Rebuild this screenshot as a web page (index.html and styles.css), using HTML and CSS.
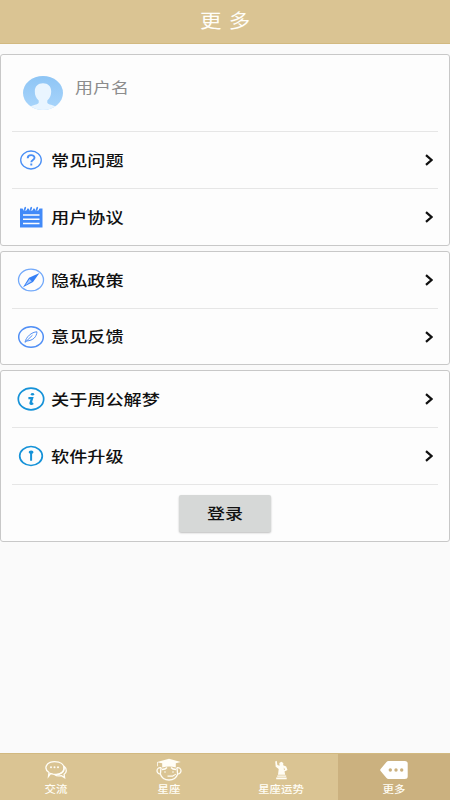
FILE: index.html
```html
<!DOCTYPE html>
<html lang="zh-CN">
<head>
<meta charset="utf-8">
<title>更多</title>
<link rel="stylesheet" href="styles.css">
</head>
<body>
<div class="app">
  <header class="header"><h1>更 多</h1></header>
  <main class="main">
    <section class="card">
      <div class="profile">
        <svg class="avatar" viewBox="0 0 40 34">
          <defs>
            <linearGradient id="sky" x1="0" y1="0" x2="0" y2="1"><stop offset="0" stop-color="#8ec5f5"/><stop offset="1" stop-color="#a9d5fb"/></linearGradient>
            <clipPath id="oval"><ellipse cx="20" cy="17" rx="20" ry="17"/></clipPath>
          </defs>
          <g clip-path="url(#oval)">
            <rect width="40" height="34" fill="url(#sky)"/>
            <path fill="#e9f5ff" d="M20 7.3c-5 0-8.2 3.200-8.200 8 0 4 1 6.500 3.900 9.200v2.300c-1 2-5.700 2.200-9.700 4.200v4h28v-4c-4-2-8.700-2.200-9.700-4.200v-2.300c2.900-2.700 3.900-5.200 3.900-9.200 0-4.800-3.200-8-8.200-8z"/>
          </g>
        </svg>
        <span class="username">用户名</span>
      </div>
      <div class="row">
        <svg class="icon" viewBox="0 0 28 24"><g fill="none" stroke="#4a8ff5"><ellipse cx="14" cy="12" rx="10.300" ry="9" stroke-width="1.300"/><path stroke-width="1.900" d="M10.700 10.200c0-4 6.800-4 6.800-.4 0 2.300-3.200 2.200-3.200 4.500M14.300 15.400v2"/></g></svg>
        <span class="label">常见问题</span>
        <svg class="arrow" viewBox="0 0 8 12"><path d="M1 1.200L6.500 6 1 10.800"/></svg>
      </div>
      <div class="row">
        <svg class="icon" viewBox="0 0 28 24"><path fill="#428af8" d="M3 3.500h22.500V22.500H3z"/><g fill="#fdfdfd"><circle cx="8" cy="3.500" r="2.300"/><circle cx="14" cy="3.500" r="2.300"/><circle cx="20" cy="3.500" r="2.300"/></g><path stroke="#428af8" stroke-width="1.700" stroke-linecap="round" d="M8.300 2.700L7.500 5M14.300 2.700L13.500 5M20.300 2.700L19.500 5"/><path stroke="#fdfdfd" stroke-width="1.500" d="M6 10h16.500M6 14.200h16.500M6 18.400h16.500"/></svg>
        <span class="label">用户协议</span>
        <svg class="arrow" viewBox="0 0 8 12"><path d="M1 1.200L6.500 6 1 10.800"/></svg>
      </div>
    </section>
    <section class="card">
      <div class="row">
        <svg class="icon" viewBox="0 0 28 24"><ellipse cx="14" cy="12" rx="12.500" ry="10.800" fill="none" stroke="#72a9fa" stroke-width="1.300"/><path fill="#347ff6" d="M22.500 5L12 9.800 6 19.200l10-5.200z"/><path fill="#a9cbff" d="M12.500 11L8.300 17.200l6.500-4z"/></svg>
        <span class="label">隐私政策</span>
        <svg class="arrow" viewBox="0 0 8 12"><path d="M1 1.200L6.500 6 1 10.800"/></svg>
      </div>
      <div class="row">
        <svg class="icon" viewBox="0 0 28 24"><g fill="none" stroke="#508ff5"><ellipse cx="14" cy="12" rx="12.300" ry="10.300" stroke-width="1.500"/><path stroke-width="1" d="M8 17.300c1-5.300 6.500-10.300 12-10.500-.5 5-3.500 8.700-10.500 9.200L15.500 10.200M8 17.300l2-1.800"/></g></svg>
        <span class="label">意见反馈</span>
        <svg class="arrow" viewBox="0 0 8 12"><path d="M1 1.200L6.500 6 1 10.800"/></svg>
      </div>
    </section>
    <section class="card">
      <div class="row">
        <svg class="icon" viewBox="0 0 28 24"><ellipse cx="14" cy="12" rx="12.700" ry="10.800" fill="none" stroke="#1592d8" stroke-width="1.700"/><ellipse cx="15.500" cy="7.300" rx="1.700" ry="1.300" fill="#1592d8"/><path fill="none" stroke="#1592d8" stroke-width="2.300" d="M11.400 11.200h3.700l-1.500 4.600c-.5 1.500 1.300 1.300 2.500.4"/></svg>
        <span class="label">关于周公解梦</span>
        <svg class="arrow" viewBox="0 0 8 12"><path d="M1 1.200L6.500 6 1 10.800"/></svg>
      </div>
      <div class="row">
        <svg class="icon" viewBox="0 0 28 24"><ellipse cx="14" cy="12" rx="11.300" ry="9.500" fill="none" stroke="#1592d8" stroke-width="1.700"/><path fill="#1592d8" d="M14.100 6.500c-1.600 0-2.400.9-2.400 2.100l1.400 1.500v6.600h2v-6.600l1.400-1.500c0-1.200-.8-2.100-2.400-2.100z"/></svg>
        <span class="label">软件升级</span>
        <svg class="arrow" viewBox="0 0 8 12"><path d="M1 1.200L6.500 6 1 10.800"/></svg>
      </div>
      <div class="login-row"><button class="login"><span>登录</span></button></div>
    </section>
  </main>
  <nav class="tabs">
    <a class="tab">
      <svg viewBox="0 0 28 24"><g fill="none" stroke="#fffdf5" stroke-width="1.300"><path d="M8.600 15.500L6.500 18.300l.5-3.800C1 10.500 4.500 3.700 12.500 3.700c6 0 9.600 2.800 9.600 6.700 0 4.300-5 7-11 5.800z"/><path d="M22.300 8.500c3.200 2.500 2.200 6.500-.2 7.800l.5 3.300-3.200-2c-3 .7-5.200.3-6.500-.8 5.300-.2 9.300-3 9.400-8.300z"/></g><g fill="#fffdf5"><circle cx="9" cy="9.300" r="1"/><circle cx="12.500" cy="9.300" r="1"/><circle cx="16" cy="9.300" r="1"/></g></svg>
      <span>交流</span>
    </a>
    <a class="tab">
      <svg viewBox="0 0 28 24"><path fill="#fffdf5" d="M14 .8L25.800 4l-5 1.300v4.200q-6.500-2-13.600 0V5.300L3 4.500v3.700h-.8V4z"/><g fill="none" stroke="#fffdf5" stroke-width="1.300"><path d="M6 9.700c-5.200-.7-5.200 6.200-.7 6.300 2.700 8 14.700 8 17.400 0 4.500-.1 4.500-7-.7-6.300M6.300 9.500c-.8 2.500-.8 4.500-.8 6M21.700 9.500c.8 2.500.8 4.500.8 6M7 11.500q3.500 0 5-2M21 11.500q-3.500 0-5-2"/></g><path fill="#fffdf5" d="M12.500 17.400h5l3.200-1.700.4.800-3.300 2.300h-5.300z"/><circle cx="10" cy="14" r=".8" fill="#fffdf5"/><circle cx="18" cy="14" r=".8" fill="#fffdf5"/></svg>
      <span>星座</span>
    </a>
    <a class="tab">
      <svg viewBox="0 0 28 24"><path fill="#fffdf5" d="M8.200 3.500l1.500-.8.700 4.300 2.200.7-.3-2.700 2-1.300 2 1.300-.1 2.200 3 1.200 1.300 3.700-3 1.400.7 3.200H11l.7-5.800-3-2.200z"/><path fill="#fffdf5" d="M10.200 17.400h9v1.300h-9zM9.200 19.400h10.500v1.800H9.200z"/><path d="M16.800 9.400l1.200 2-1.100.9z" fill="#dac493"/></svg>
      <span>星座运势</span>
    </a>
    <a class="tab active">
      <svg viewBox="0 0 28 24"><path fill="#fff" d="M8.500 3h16.200q3 0 3 2.500v13q0 2.500-3 2.500H8.500q-1.200 0-2-1L.6 13q-.8-1 0-2l5.900-7q.8-1 2-1z"/><g fill="#cbb17f"><circle cx="10.300" cy="12" r="1.700"/><circle cx="16" cy="12" r="1.700"/><circle cx="21.700" cy="12" r="1.700"/></g></svg>
      <span>更多</span>
    </a>
  </nav>
</div>
</body>
</html>
```
FILE: styles.css
```css
* { box-sizing: border-box; }
body {
  margin: 0;
  background: #fafafa;
  font-family: "Noto Sans CJK SC", sans-serif;
}
.app { display: flex; flex-direction: column; height: 800px; overflow: hidden; }
.header {
  flex: none;
  height: 44px;
  background: #dac493;
  border-bottom: 1px solid #d2b980;
  display: flex;
  align-items: center;
  justify-content: center;
}
.header h1 {
  margin: 0 0 3px;
  color: #fffefa;
  font-size: 19px;
  font-weight: 400;
  line-height: 28px;
  word-spacing: 2px;
  transform: scaleX(1.13);
}
.main {
  flex: 1;
  display: flex;
  flex-direction: column;
  gap: 5px;
  padding-top: 10px;
}
.card {
  background: #fdfdfd;
  border: 1px solid #c8c8c8;
  border-radius: 3px;
  padding: 0 11px;
}
.profile {
  display: flex;
  height: 77px;
  padding: 21px 0 0 11px;
  border-bottom: 1px solid #e6e6e6;
}
.avatar { width: 40px; height: 34px; }
.username {
  margin: -1px 0 0 12px;
  height: 24px;
  line-height: 24px;
  font-size: 15px;
  color: #8c8c8c;
  transform: scaleX(1.2);
  transform-origin: left;
}
.row {
  display: flex;
  align-items: center;
  height: 57px;
  padding: 0 5px;
  border-bottom: 1px solid #e6e6e6;
}
.card .row:last-child { border-bottom: 0; height: 56px; }
.card:nth-child(2) .row:last-child { height: 55px; }
.icon { width: 28px; height: 24px; }
.label {
  margin: -1px 0 0 6px;
  font-size: 15px;
  font-weight: 500;
  line-height: 24px;
  color: #111;
  transform: scaleX(1.21);
  transform-origin: left;
}
.arrow { width: 8px; height: 12px; margin-left: auto; }
.arrow path { fill: none; stroke: #111; stroke-width: 2.2; }
.login-row { height: 56px; padding-top: 10px; text-align: center; }
.login {
  width: 92px;
  height: 37px;
  padding: 0 0 2px;
  border: 0;
  border-radius: 2px;
  background: #d6d8d7;
  box-shadow: 0 1px 2px rgba(0, 0, 0, .25);
  font: 500 15px/24px "Noto Sans CJK SC", sans-serif;
  color: #111;
}
.login span { display: inline-block; transform: scaleX(1.2); }
.tabs {
  flex: none;
  display: grid;
  grid-template-columns: repeat(4, 1fr);
  height: 47px;
  background: #dac493;
  border-top: 1px solid #d2b980;
}
.tab {
  display: flex;
  flex-direction: column;
  align-items: center;
  padding-top: 4px;
  color: #fffdf5;
}
.tab.active { background: #cbb17f; }
.tab svg { width: 28px; height: 24px; }
.tab span {
  margin-top: -1px;
  font-size: 10px;
  font-weight: 500;
  line-height: 15px;
  transform: scaleX(1.14);
}
```
